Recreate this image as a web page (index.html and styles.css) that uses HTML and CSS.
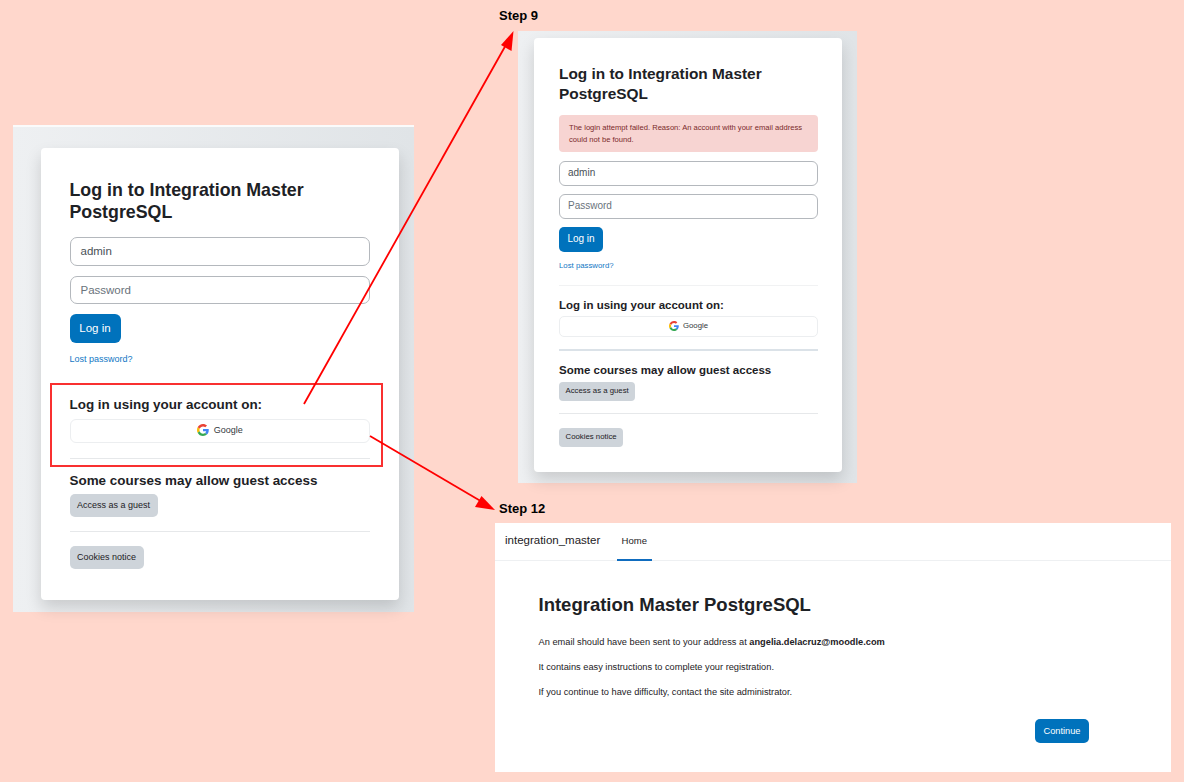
FILE: index.html
```html
<!DOCTYPE html>
<html lang="en">
<head>
  <meta charset="UTF-8" />
  <title>Login steps</title>
  <link rel="stylesheet" href="styles.css">
</head>
<body>
  <div class="canvas">
    <div class="step-label step-label-9">Step 9</div>
    <div class="step-label step-label-12">Step 12</div>

    <!-- first screenshot -->
    <section class="shot shot-start">
      <div class="card">
        <h1>Log in to Integration Master PostgreSQL</h1>
        <div class="field">admin</div>
        <div class="field placeholder">Password</div>
        <div class="btn btn-primary">Log in</div>
        <a class="lost-link">Lost password?</a>
        <div class="gap-block"></div>
        <h2>Log in using your account on:</h2>
        <div class="google-btn">
          <svg class="google-icon" viewBox="0 0 48 48"><path fill="#EA4335" d="M24 9.5c3.5 0 6.700 1.200 9.200 3.600l6.900-6.900C35.900 2.400 30.400 0 24 0 14.600 0 6.500 5.400 2.600 13.200l8 6.200C12.500 13.700 17.800 9.500 24 9.500z"/><path fill="#4285F4" d="M47 24.500c0-1.600-.1-3.100-.4-4.500H24v9h12.900c-.6 3-2.200 5.500-4.700 7.200l7.700 6c4.500-4.200 7.100-10.300 7.100-17.700z"/><path fill="#FBBC05" d="M10.600 28.600c-.5-1.400-.8-3-.8-4.600s.3-3.200.8-4.600l-8-6.200C.9 16.500 0 20.100 0 24s.9 7.500 2.600 10.800l8-6.200z"/><path fill="#34A853" d="M24 48c6.500 0 11.900-2.100 15.900-5.800l-7.700-6c-2.200 1.400-4.900 2.300-8.200 2.300-6.200 0-11.500-4.200-13.400-9.900l-8 6.200C6.500 42.600 14.600 48 24 48z"/></svg>
          <span>Google</span>
        </div>
        <hr class="rule rule-first">
        <h2>Some courses may allow guest access</h2>
        <div class="btn btn-grey">Access as a guest</div>
        <hr class="rule rule-last">
        <div class="btn btn-grey">Cookies notice</div>
      </div>
    </section>

    <!-- step 9 screenshot -->
    <section class="shot shot-failed">
      <div class="card">
        <h1>Log in to Integration Master PostgreSQL</h1>
        <div class="alert">The login attempt failed. Reason: An account with your email address could not be found.</div>
        <div class="field">admin</div>
        <div class="field placeholder">Password</div>
        <div class="btn btn-primary">Log in</div>
        <a class="lost-link">Lost password?</a>
        <hr class="rule rule-lost">
        <h2>Log in using your account on:</h2>
        <div class="google-btn">
          <svg class="google-icon" viewBox="0 0 48 48"><path fill="#EA4335" d="M24 9.5c3.5 0 6.700 1.200 9.200 3.600l6.900-6.900C35.900 2.400 30.400 0 24 0 14.600 0 6.500 5.400 2.600 13.200l8 6.200C12.500 13.700 17.800 9.500 24 9.500z"/><path fill="#4285F4" d="M47 24.500c0-1.600-.1-3.100-.4-4.500H24v9h12.900c-.6 3-2.200 5.500-4.700 7.200l7.700 6c4.500-4.200 7.100-10.300 7.100-17.700z"/><path fill="#FBBC05" d="M10.600 28.600c-.5-1.400-.8-3-.8-4.600s.3-3.200.8-4.600l-8-6.200C.9 16.500 0 20.100 0 24s.9 7.500 2.600 10.800l8-6.200z"/><path fill="#34A853" d="M24 48c6.500 0 11.900-2.100 15.900-5.800l-7.700-6c-2.200 1.400-4.900 2.300-8.200 2.300-6.200 0-11.500-4.200-13.400-9.900l-8 6.200C6.500 42.600 14.600 48 24 48z"/></svg>
          <span>Google</span>
        </div>
        <hr class="rule rule-first">
        <h2>Some courses may allow guest access</h2>
        <div class="btn btn-grey">Access as a guest</div>
        <hr class="rule rule-last">
        <div class="btn btn-grey">Cookies notice</div>
      </div>
    </section>

    <!-- step 12 screenshot -->
    <section class="shot shot-email">
      <nav class="topnav">
        <span class="brand">integration_master</span>
        <span class="nav-item">Home</span>
      </nav>
      <div class="page">
        <h1>Integration Master PostgreSQL</h1>
        <p>An email should have been sent to your address at <b>angelia.delacruz@moodle.com</b></p>
        <p>It contains easy instructions to complete your registration.</p>
        <p>If you continue to have difficulty, contact the site administrator.</p>
        <div class="continue-row"><div class="btn btn-primary">Continue</div></div>
      </div>
    </section>

    <!-- annotations -->
    <div class="highlight"></div>
    <svg class="arrows" viewBox="0 0 1184 782">
      <line x1="304" y1="404" x2="507" y2="43" stroke="#ff0000" stroke-width="1.8"/>
      <polygon points="513.500,31 511.500,51 501,45" fill="#ff0000"/>
      <line x1="370" y1="436" x2="484" y2="503" stroke="#ff0000" stroke-width="1.8"/>
      <polygon points="495,510 475,507 481.500,496" fill="#ff0000"/>
    </svg>
  </div>
</body>
</html>
```

FILE: styles.css
```css
body {
  margin: 0;
  font-family: "Liberation Sans", Arial, sans-serif;
  background: #ffd7cc;
  color: #1d2125;
}
.canvas {
  position: relative;
  width: 1184px;
  height: 782px;
  overflow: hidden;
}
.step-label {
  position: absolute;
  font-size: 13px;
  font-weight: bold;
  line-height: 16px;
  color: #000;
}
.step-label-9 {
  left: 499px;
  top: 8px;
}
.step-label-12 {
  left: 499px;
  top: 501px;
}

.shot {
  position: absolute;
  box-sizing: border-box;
}
.card {
  background: #fff;
  border-radius: 4px;
  box-shadow: 0 8px 16px rgba(0,0,0,0.15);
  box-sizing: border-box;
  display: flex;
  flex-direction: column;
  align-items: flex-start;
}
.card h1, .card h2 {
  margin: 0;
  font-weight: bold;
  color: #1d2125;
}
.field {
  box-sizing: border-box;
  width: 100%;
  background: #fff;
  border: 1px solid #b4b8bd;
  color: #495057;
}
.placeholder {
  color: #6a737b;
}
.btn {
  box-sizing: border-box;
  white-space: nowrap;
}
.btn-primary {
  background-color: #0072bc;
  color: #fff;
}
.btn-grey {
  background: #ced4da;
  color: #1d2125;
}
.lost-link {
  color: #1177c4;
}
.google-btn {
  box-sizing: border-box;
  width: 100%;
  display: flex;
  justify-content: center;
  align-items: center;
  background: #fff;
  border: 1px solid #eceef0;
  color: #343a40;
}
.rule {
  width: 100%;
  margin: 0;
  border: 0;
  border-top: 1px solid #e6e8ea;
}

/* first shot */
.shot-start {
  left: 13px;
  top: 125px;
  width: 401px;
  height: 487px;
  border-top: 2px solid #fbfbfb;
  background: linear-gradient(90deg, #eef0f2, #e0e4e7);
  padding: 21px 15px 0 28px;
}
.shot-start .card {
  width: 358px;
  height: 452px;
  padding: 31px 29px 0 28.500px;
}
.shot-start h1 {
  font-size: 17.800px;
  line-height: 22px;
  margin-bottom: 14px;
}
.shot-start .field {
  height: 28.500px;
  border-radius: 7px;
  padding: 0 10px;
  font-size: 11.500px;
  line-height: 26.500px;
  margin-bottom: 10px;
}
.shot-start .btn-primary {
  height: 29px;
  width: 51px;
  border-radius: 6px;
  font-size: 11.500px;
  line-height: 29px;
  text-align: center;
}
.shot-start .lost-link {
  font-size: 9px;
  line-height: 12px;
  margin-top: 10px;
}
.shot-start .gap-block {
  height: 31px;
}
.shot-start h2 {
  font-size: 13.450px;
  line-height: 18px;
}
.shot-start .google-btn {
  height: 24px;
  margin-top: 5px;
  padding-bottom: 2px;
  border-radius: 6px;
  font-size: 9px;
  gap: 5px;
}
.shot-start .google-icon {
  width: 12px;
  height: 12px;
}
.shot-start .rule-first {
  margin-top: 14.500px;
  margin-bottom: 13.500px;
}
.shot-start .btn-grey {
  height: 23px;
  border-radius: 5px;
  padding: 0 7.500px;
  font-size: 9px;
  line-height: 23px;
  margin-top: 4px;
}
.shot-start .rule-last {
  margin-top: 14px;
  margin-bottom: 10px;
}

/* step 9 shot */
.shot-failed {
  left: 518px;
  top: 31px;
  width: 339px;
  height: 452px;
  background: linear-gradient(90deg, #eef0f2, #e0e4e7);
  padding: 7px 15px 0 16px;
}
.shot-failed .card {
  width: 308px;
  height: 434px;
  padding: 26px 24px 0 25px;
}
.shot-failed h1 {
  font-size: 15.400px;
  line-height: 19.500px;
  margin-bottom: 12px;
}
.shot-failed .alert {
  box-sizing: border-box;
  width: 100%;
  height: 37px;
  padding: 6.500px 9px 6px 10px;
  border-radius: 4px;
  background: #f7d4d2;
  color: #7a2a2a;
  font-size: 7.600px;
  line-height: 12px;
  margin-bottom: 9px;
}
.shot-failed .field {
  height: 24.500px;
  border-radius: 6px;
  padding: 0 8px;
  font-size: 10px;
  line-height: 22.500px;
  margin-bottom: 8.500px;
}
.shot-failed .btn-primary {
  height: 24.500px;
  width: 44px;
  border-radius: 5px;
  font-size: 10px;
  line-height: 24.500px;
  text-align: center;
}
.shot-failed .lost-link {
  font-size: 7.800px;
  line-height: 10px;
  margin-top: 9.500px;
}
.shot-failed .rule-lost {
  margin-top: 14px;
  margin-bottom: 12px;
  border-top-color: #f1f2f3;
}
.shot-failed h2 {
  font-size: 11.500px;
  line-height: 15px;
}
.shot-failed .google-btn {
  height: 21px;
  margin-top: 3px;
  padding-bottom: 2px;
  border-radius: 5px;
  font-size: 7.800px;
  gap: 4px;
}
.shot-failed .google-icon {
  width: 10px;
  height: 10px;
}
.shot-failed .rule-first {
  margin-top: 12px;
  margin-bottom: 12px;
  border-top: 2px solid #dbe2e8;
}
.shot-failed .btn-grey {
  height: 19px;
  border-radius: 4px;
  padding: 0 6.500px;
  font-size: 7.800px;
  line-height: 18px;
  margin-top: 3.500px;
}
.shot-failed .rule-last {
  margin-top: 12.500px;
  margin-bottom: 10px;
}

/* step 12 shot */
.shot-email {
  left: 495px;
  top: 523px;
  width: 676px;
  height: 249px;
  background: #fff;
}
.topnav {
  box-sizing: border-box;
  height: 38px;
  display: flex;
  align-items: stretch;
  padding-left: 10px;
  border-bottom: 1px solid #eef0f2;
}
.brand {
  font-size: 11.500px;
  line-height: 35px;
  color: #1d2125;
}
.nav-item {
  box-sizing: border-box;
  margin-left: 16.500px;
  width: 35px;
  height: 38px;
  text-align: center;
  font-size: 9.500px;
  line-height: 35px;
  border-bottom: 2px solid #0f6cbf;
  color: #1d2125;
}
.page {
  padding: 33px 82px 0 43.500px;
}
.page h1 {
  margin: 0 0 20px;
  font-size: 18.500px;
  line-height: 22px;
  font-weight: bold;
}
.page p {
  margin: 0 0 13px;
  font-size: 9.250px;
  line-height: 12px;
}
.continue-row {
  display: flex;
  justify-content: flex-end;
  margin-top: 21px;
}
.continue-row .btn-primary {
  width: 54px;
  height: 24px;
  border-radius: 5px;
  text-align: center;
  font-size: 9.250px;
  line-height: 24px;
}

/* annotations */
.highlight {
  position: absolute;
  left: 50px;
  top: 383px;
  width: 333px;
  height: 83.500px;
  box-sizing: border-box;
  border: 2px solid #f93030;
}
.arrows {
  position: absolute;
  left: 0;
  top: 0;
  width: 1184px;
  height: 782px;
  pointer-events: none;
}
```
